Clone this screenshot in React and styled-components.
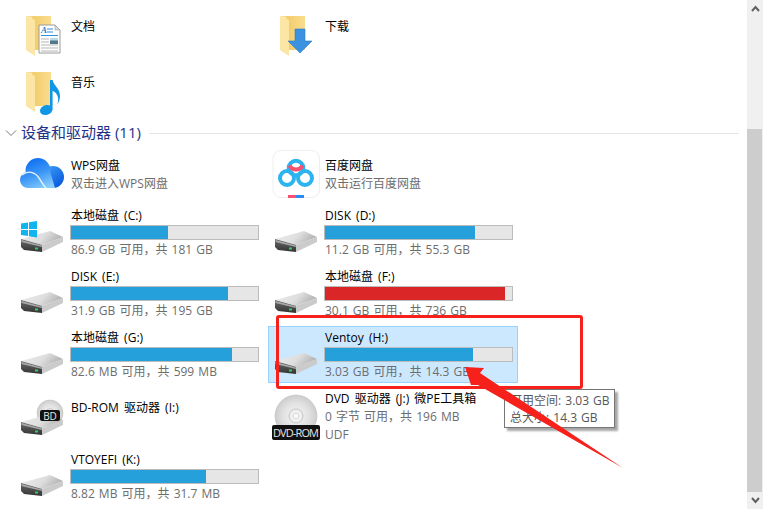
import React from "react";
import styled, { createGlobalStyle } from "styled-components";

const Global = createGlobalStyle`
  html, body { margin: 0; padding: 0; background: #fff; }
  body { font-family: "Open Sans", "Noto Sans CJK SC", sans-serif; }
`;

const Window = styled.div`
  position: relative;
  width: 763px;
  height: 509px;
  overflow: hidden;
  display: flex;
  background: #fff;
  font-size: 12px;
  line-height: 18px;
`;
const Content = styled.main`
  flex: 1;
  min-width: 0;
  padding: 14px 8px 0 14px;
`;
const Grid = styled.div`
  display: grid;
  grid-template-columns: 250px 250px;
  column-gap: 4px;
  row-gap: 4px;
`;
const SectionHeader = styled.div`
  box-sizing: border-box;
  height: 21px;
  padding-top: 2px;
  margin-left: -14px;
  display: flex;
  align-items: center;
  color: #1e3287;
  font-size: 15px;
  white-space: nowrap;
`;
const Chevron = styled.svg`
  width: 12px;
  height: 8px;
  margin: -2px 4px 0 5px;
  flex: none;
`;
const SectionTitle = styled.span`
  margin: -3px 8px 0 0;
`;
const Rule = styled.div`
  flex: 1;
  height: 1px;
  background: #e5e5e5;
`;
const Tile = styled.div`
  box-sizing: border-box;
  height: ${(p) => (p.$folder ? 52 : 57)}px;
  display: flex;
  padding-left: 5px;
  background: ${(p) => (p.$selected ? "#cce8ff" : "transparent")};
  box-shadow: ${(p) => (p.$selected ? "inset 0 0 0 1px #99d1ff" : "none")};
`;
const IconSlot = styled.svg`
  width: 48px;
  height: 48px;
  flex: none;
  margin-top: ${(p) => (p.$folder ? 2 : 7)}px;
  margin-right: 4px;
  overflow: visible;
`;
const Body = styled.div`
  flex: 1;
  min-width: 0;
  padding-top: ${(p) => p.$top}px;
`;
const Name = styled.div`
  color: #000;
  white-space: nowrap;
  word-spacing: 2px;
`;
const Sub = styled.div`
  color: #6d6d6d;
  white-space: nowrap;
  word-spacing: 1px;
`;
const Bar = styled.div`
  box-sizing: border-box;
  width: 189px;
  height: 15px;
  margin: 0 0 1px -1px;
  background: #e6e6e6;
  border: 1px solid #bcbcbc;
`;
const BarFill = styled.div`
  height: 100%;
  background: ${(p) => (p.$danger ? "#da2626" : "#26a0da")};
`;
const Scrollbar = styled.aside`
  width: 16px;
  flex: none;
  display: flex;
  flex-direction: column;
  background: #f0f0f0;
`;
const ScrollButton = styled.div`
  height: 17px;
  display: flex;
  align-items: center;
  justify-content: center;
  flex: none;
`;
const ScrollSpace = styled.div`
  height: 112px;
`;
const Thumb = styled.div`
  height: 363px;
  width: 15px;
  background: #cdcdcd;
`;
const Tooltip = styled.div`
  position: absolute;
  left: 504px;
  top: 389px;
  width: 111px;
  height: 39px;
  box-sizing: border-box;
  padding: 2px 0 0 5px;
  background: #fff;
  border: 1px solid #767676;
  box-shadow: 3px 3px 2px rgba(0, 0, 0, 0.35);
  color: #575757;
  line-height: 17px;
  font-size: 12px;
  word-spacing: 1px;
  white-space: nowrap;
`;
const Callout = styled.div`
  position: absolute;
  left: 276px;
  top: 315px;
  width: 307px;
  height: 74px;
  box-sizing: border-box;
  border: 3px solid #f5211a;
  border-radius: 3px;
`;
const Arrow = styled.svg`
  position: absolute;
  left: 0;
  top: 0;
  width: 763px;
  height: 509px;
  pointer-events: none;
`;

const FolderBack = () => (
  <>
    <defs>
      <linearGradient id="fb" x1="0" y1="0" x2="1" y2="0">
        <stop offset="0" stopColor="#f2cb68" />
        <stop offset="1" stopColor="#f9dd8f" />
      </linearGradient>
    </defs>
    <rect x="13" y="0" width="19" height="34" fill="url(#fb)" />
    <polygon points="7,0 16,4 16,40 7,34" fill="#fbe6a6" />
    <polygon points="7,0 13,0 16,4 16,3" fill="#f6d987" />
  </>
);

const DocIcon = () => (
  <IconSlot $folder viewBox="0 0 48 48">
    <FolderBack />
    <polygon points="20,9 36,9 41,14 41,37 20,37" fill="#fff" stroke="#9a9a9a" />
    <polygon points="36,9 36,14 41,14" fill="#dcdcdc" stroke="#9a9a9a" strokeWidth=".6" />
    <text x="22" y="17" fontFamily="Liberation Serif, serif" fontStyle="italic" fontWeight="700" fontSize="9" fill="#2a7fd0">A</text>
    <path d="M28 13h6M28 16h6M22 19.500h17" stroke="#2f8fe0" strokeWidth="1" />
    <path d="M22 23h8M22 26h8M22 29h17M22 32h17M22 35h17" stroke="#b5b5b5" strokeWidth="1" />
    <rect x="31" y="22" width="8" height="6" fill="#52788a" />
    <rect x="31" y="22" width="8" height="2.500" fill="#b9d8e8" />
  </IconSlot>
);
const DownloadIcon = () => (
  <IconSlot $folder viewBox="0 0 48 48">
    <FolderBack />
    <polygon points="22,13 32,13 32,25 39,25 27,37 15,25 22,25" fill="#3a92e0" stroke="#2f7cc4" strokeWidth=".6" />
  </IconSlot>
);
const MusicIcon = () => (
  <IconSlot $folder viewBox="0 0 48 48">
    <FolderBack />
    <path
      d="M31 8h2.600c.6 5 7.400 8 7.400 16 0 3-1 6-2.600 8.400 .5-2.400 1-4.600 .6-7-.6-3.400-3.400-5.800-5.400-6.600V37c0 3.400-3.600 6-7.400 6-3.400 0-5.200-1.800-5.200-4 0-3.400 3.800-6 7.400-6 1.100 0 1.900.2 2.600.6z"
      fill="#0f97e6"
    />
  </IconSlot>
);
const CloudIcon = () => (
  <IconSlot viewBox="0 0 48 48">
    <defs>
      <linearGradient id="cl" gradientUnits="userSpaceOnUse" x1="14" y1="8" x2="26" y2="38">
        <stop offset="0" stopColor="#0f6ff2" />
        <stop offset="0.500" stopColor="#3a95f6" />
        <stop offset="1" stopColor="#86cdfc" />
      </linearGradient>
      <linearGradient id="cr" gradientUnits="userSpaceOnUse" x1="26" y1="16" x2="42" y2="36">
        <stop offset="0" stopColor="#3d9ff7" />
        <stop offset="1" stopColor="#0a58dc" />
      </linearGradient>
    </defs>
    <circle cx="34" cy="27" r="11" fill="url(#cr)" />
    <rect x="24" y="30" width="10" height="8" fill="url(#cr)" />
    <circle cx="19" cy="20.500" r="12.500" fill="url(#cl)" />
    <circle cx="9" cy="30" r="8" fill="url(#cl)" />
    <polygon points="9,22 31,21 36,38 9,38" fill="url(#cl)" />
    <path d="M3 25C9 20 16 22 20 28c2.500 3.500 3.500 6.500 7 10" fill="none" stroke="#e4f2ff" strokeWidth="1.400" />
  </IconSlot>
);
const BaiduIcon = () => (
  <IconSlot viewBox="0 0 48 48">
    <rect x="0" y="0.500" width="46.500" height="47" rx="8" fill="#fff" stroke="#eeeeee" />
    <circle cx="14" cy="28" r="7" fill="none" stroke="#2cb4f0" strokeWidth="4" />
    <circle cx="32" cy="28" r="7" fill="none" stroke="#2cb4f0" strokeWidth="4" />
    <circle cx="23" cy="18" r="7.300" fill="none" stroke="#2cb4f0" strokeWidth="4" />
    <path d="M16.500 15.500A7.300 7.300 0 0 0 29.500 15.500" fill="none" stroke="#f8506e" strokeWidth="4" />
    <rect x="15" y="45" width="8" height="3" fill="#f8506e" />
    <rect x="23" y="45" width="8" height="3" fill="#2a8cf0" />
  </IconSlot>
);
const DriveShape = ({ id }) => (
  <>
    <defs>
      <linearGradient id={`t${id}`} x1="0" y1="0" x2="1" y2="0.300">
        <stop offset="0" stopColor="#ededed" />
        <stop offset="0.600" stopColor="#dedede" />
        <stop offset="1" stopColor="#b4b4b4" />
      </linearGradient>
      <linearGradient id={`f${id}`} x1="0" y1="0" x2="0" y2="1">
        <stop offset="0" stopColor="#6a6a6a" />
        <stop offset="1" stopColor="#333" />
      </linearGradient>
    </defs>
    <polygon points="2,28 31,20 44,26 23,34" fill={`url(#t${id})`} />
    <polygon points="23,34 44,26 44,31 23,41" fill="#cbcbcb" />
    <polygon points="2,28 23,34 23,41 5,39 2,36" fill={`url(#f${id})`} />
    <polygon points="2.500,29 23,34.500 23,36 2.500,31" fill="#a8a8a8" />
    <rect x="16" y="36.500" width="3" height="2" fill="#2bd25a" />
  </>
);
const DriveIcon = ({ id }) => (
  <IconSlot viewBox="0 0 48 48">
    <DriveShape id={id} />
  </IconSlot>
);
const WinDriveIcon = () => (
  <IconSlot viewBox="0 0 48 48">
    <DriveShape id="win" />
    <polygon points="2,12.500 9,11.500 9,18 2,18" fill="#10b4ee" />
    <polygon points="10,11.300 18,10 18,18 10,18" fill="#10b4ee" />
    <polygon points="2,19 9,19 9,25 2,24" fill="#10b4ee" />
    <polygon points="10,19 18,19 18,26.500 10,25.300" fill="#10b4ee" />
  </IconSlot>
);
const DiscShape = ({ cx, cy, r, id }) => (
  <>
    <defs>
      <radialGradient id={id}>
        <stop offset="0" stopColor="#f4f4f4" />
        <stop offset="0.600" stopColor="#e2e2e2" />
        <stop offset="1" stopColor="#cdcdcd" />
      </radialGradient>
    </defs>
    <circle cx={cx} cy={cy} r={r} fill={`url(#${id})`} stroke="#c0c0c0" strokeWidth=".6" />
    <circle cx={cx} cy={cy} r={r * 0.33} fill="#efefef" stroke="#bbbbbb" strokeWidth=".8" />
    <circle cx={cx} cy={cy} r={r * 0.12} fill="#fff" stroke="#c5c5c5" strokeWidth=".6" />
  </>
);
const BdIcon = () => (
  <IconSlot viewBox="0 0 48 48">
    <DiscShape cx="31" cy="19" r="13" id="bd" />
    <DriveShape id="bdd" />
    <rect x="21" y="16" width="20" height="11" rx="2" fill="#111" />
    <text x="31" y="25.500" textAnchor="middle" fontFamily="Open Sans, sans-serif" fontSize="10" fill="#e8e8e8">BD</text>
  </IconSlot>
);
const DvdIcon = () => (
  <IconSlot viewBox="0 0 48 48">
    <DiscShape cx="23" cy="22" r="21" id="dvd" />
    <rect x="-1" y="31" width="48" height="15" rx="2" fill="#111" />
    <text x="23" y="42.500" textAnchor="middle" fontFamily="Open Sans, sans-serif" fontSize="11" fill="#e8e8e8" textLength="46">DVD-ROM</text>
  </IconSlot>
);

const ScrollArrow = ({ up }) => (
  <svg width="9" height="7" viewBox="0 0 9 7">
    <path d={up ? "M1 6l3.500-4 3.500 4" : "M1 1l3.500 4 3.500-4"} fill="none" stroke="#606060" strokeWidth="2" />
  </svg>
);

const folders = [
  { name: "文档", icon: <DocIcon /> },
  { name: "下载", icon: <DownloadIcon /> },
  { name: "音乐", icon: <MusicIcon /> },
];

const drives = [
  { name: "WPS网盘", sub: "双击进入WPS网盘", icon: <CloudIcon />, top: 14 },
  { name: "百度网盘", sub: "双击运行百度网盘", icon: <BaiduIcon />, top: 14 },
  { name: "本地磁盘 (C:)", sub: "86.9 GB 可用\uFF0C共 181 GB", pct: 52, icon: <WinDriveIcon /> },
  { name: "DISK (D:)", sub: "11.2 GB 可用\uFF0C共 55.3 GB", pct: 80, icon: <DriveIcon id="d" /> },
  { name: "DISK (E:)", sub: "31.9 GB 可用\uFF0C共 195 GB", pct: 84, icon: <DriveIcon id="e" /> },
  { name: "本地磁盘 (F:)", sub: "30.1 GB 可用\uFF0C共 736 GB", pct: 96, danger: true, icon: <DriveIcon id="f" /> },
  { name: "本地磁盘 (G:)", sub: "82.6 MB 可用\uFF0C共 599 MB", pct: 86, icon: <DriveIcon id="g" /> },
  { name: "Ventoy (H:)", sub: "3.03 GB 可用\uFF0C共 14.3 GB", pct: 79, selected: true, icon: <DriveIcon id="h" /> },
  { name: "BD-ROM 驱动器 (I:)", icon: <BdIcon />, top: 12 },
  { name: "DVD 驱动器 (J:) 微PE工具箱", sub: "0 字节 可用\uFF0C共 196 MB", extra: "UDF", icon: <DvdIcon /> },
  { name: "VTOYEFI (K:)", sub: "8.82 MB 可用\uFF0C共 31.7 MB", pct: 72, icon: <DriveIcon id="k" /> },
];

export default function App() {
  return (
    <Window>
      <Global />
      <Content>
        <Grid>
          {folders.map((f) => (
            <Tile $folder key={f.name}>
              {f.icon}
              <Body $top={4}>
                <Name>{f.name}</Name>
              </Body>
            </Tile>
          ))}
        </Grid>
        <SectionHeader>
          <Chevron viewBox="0 0 12 8">
            <path d="M1 1.500l5 5 5-5" fill="none" stroke="#7a7a7a" strokeWidth="1" />
          </Chevron>
          <SectionTitle>设备和驱动器 (11)</SectionTitle>
          <Rule />
        </SectionHeader>
        <Grid>
          {drives.map((d) => (
            <Tile key={d.name} $selected={d.selected}>
              {d.icon}
              <Body $top={d.top ?? 3}>
                <Name>{d.name}</Name>
                {d.pct !== undefined && (
                  <Bar>
                    <BarFill $danger={d.danger} style={{ width: `${d.pct}%` }} />
                  </Bar>
                )}
                {d.sub && <Sub>{d.sub}</Sub>}
                {d.extra && <Sub>{d.extra}</Sub>}
              </Body>
            </Tile>
          ))}
        </Grid>
      </Content>
      <Scrollbar>
        <ScrollButton>
          <ScrollArrow up />
        </ScrollButton>
        <ScrollSpace />
        <Thumb />
        <ScrollButton>
          <ScrollArrow />
        </ScrollButton>
      </Scrollbar>
      <Tooltip>
        可用空间: 3.03 GB
        <br />
        总大小: 14.3 GB
      </Tooltip>
      <Callout />
      <Arrow viewBox="0 0 763 509">
        <polygon points="465,367 484,368 480,373 623,468 478,385 471,385" fill="#f5211a" />
      </Arrow>
    </Window>
  );
}
